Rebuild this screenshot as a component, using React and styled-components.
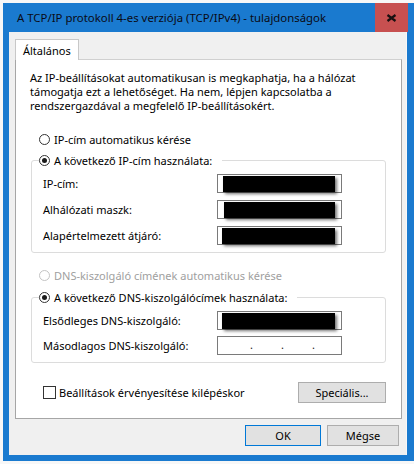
import React from 'react'
import styled, { createGlobalStyle } from 'styled-components'

const Global = createGlobalStyle`
  html, body {
    margin: 0;
    padding: 0;
    background: #f7f7f7;
  }
  body {
    font-family: "Noto Sans", "Open Sans", sans-serif;
    font-size: 11px;
    color: #000;
  }
`

const Window = styled.div`
  margin: 3px 0 0 3px;
  width: 411px;
  height: 458px;
  box-sizing: border-box;
  background: #1a7acf;
  padding: 0 7px 6px 6px;
  display: flex;
  flex-direction: column;
`

const TitleBar = styled.div`
  height: 29px;
  display: flex;
  align-items: center;
  flex-shrink: 0;
`

const Title = styled.div`
  flex: 1;
  padding-left: 8px;
  font-size: 11.4px;
  color: #0a0a14;
  white-space: nowrap;
`

const CloseButton = styled.div`
  width: 33px;
  height: 29px;
  margin-right: -1px;
  background: #c75050;
  display: flex;
  align-items: center;
  justify-content: center;
`

const Client = styled.div`
  flex: 1;
  background: #f0f0f0;
  border-right: 1px solid #f7f7f7;
  padding: 7px 4px 8px 6px;
  display: flex;
  flex-direction: column;
`

const Tabs = styled.div`
  display: flex;
`

const Tab = styled.div`
  height: 21px;
  box-sizing: border-box;
  padding: 3px 7px 0 7px;
  background: #fff;
  border: 1px solid #c8c8c8;
  border-bottom: none;
  margin-bottom: -1px;
  position: relative;
  z-index: 1;
  line-height: 15px;
`

const Panel = styled.div`
  height: 360px;
  box-sizing: border-box;
  background: #fff;
  border: 1px solid #a6a6a6;
  border-top-color: #d0d0d0;
  padding: 11px 15px 0 14px;
  display: flex;
  flex-direction: column;
`

const Intro = styled.p`
  margin: 0;
  line-height: 14px;
`

const Choice = styled.label`
  display: flex;
  align-items: center;
  gap: 4px;
  height: 13px;
  line-height: 13px;
  margin: ${p => p.$m || '0'};
  padding-left: ${p => p.$indent ?? 9}px;
  color: ${p => (p.$disabled ? '#a0a0a0' : '#000')};
`

const Radio = styled.span`
  width: 11px;
  height: 11px;
  box-sizing: border-box;
  border-radius: 50%;
  border: 1px solid ${p => (p.$disabled ? '#c4c4c4' : '#333')};
  background: #fff;
  display: flex;
  align-items: center;
  justify-content: center;
  flex-shrink: 0;

  &::after {
    content: '';
    display: ${p => (p.$on ? 'block' : 'none')};
    width: 5px;
    height: 5px;
    border-radius: 50%;
    background: #1a1a1a;
  }
`

const Group = styled.fieldset`
  margin: ${p => p.$m || '0'};
  padding: 7px 0 7px 11px;
  border: 1px solid #dcdcdc;
  border-radius: 3px;
  display: grid;
  grid-template-columns: 174px 125px;
  row-gap: ${p => p.$gap || 7}px;
  align-items: center;
`

const Legend = styled.legend`
  padding: 0 10px 0 0;
  margin-left: -4px;
  line-height: 13px;
`

const FieldLabel = styled.span`
  line-height: 13px;
`

const Field = styled.div`
  height: 19px;
  box-sizing: border-box;
  border: 1px solid #7a7a7a;
  background: #fff;
  display: flex;
  align-items: flex-start;
  gap: ${p => (p.$dots ? 28 : 0)}px;
  padding-left: ${p => (p.$dots ? 32 : 0)}px;
`

const Redacted = styled.div`
  height: 16px;
  margin: 1px 6px 0 ${p => p.$l || 5}px;
  flex: 1;
  background: #000;
  box-shadow: 2px 2px 3px rgba(0, 0, 0, 0.55);
`

const Dot = styled.span`
  line-height: 16px;
  width: 3px;
  color: #222;
`

const BottomRow = styled.div`
  display: flex;
  align-items: center;
  justify-content: space-between;
  margin: 19px 0 0 13px;
`

const CheckRow = styled.label`
  display: flex;
  align-items: center;
  gap: 3px;
`

const Checkbox = styled.span`
  width: 13px;
  height: 13px;
  box-sizing: border-box;
  border: 1px solid #333;
  background: #fff;
`

const Button = styled.div`
  width: ${p => p.$w || 76}px;
  height: 21px;
  box-sizing: border-box;
  background: #e1e1e1;
  border: 1px solid ${p => (p.$primary ? '#0078d7' : '#adadad')};
  display: flex;
  align-items: center;
  justify-content: center;
`

const Footer = styled.div`
  display: flex;
  justify-content: flex-end;
  gap: 6px;
  margin-top: 6px;
  padding-right: 3px;
`

const BlankField = () => (
  <Field $dots>
    <Dot>.</Dot>
    <Dot>.</Dot>
    <Dot>.</Dot>
  </Field>
)

const HiddenField = ({ l }) => (
  <Field>
    <Redacted $l={l} />
  </Field>
)

export default function App() {
  return (
    <>
      <Global />
      <Window>
        <TitleBar>
          <Title>A TCP/IP protokoll 4-es verziója (TCP/IPv4) - tulajdonságok</Title>
          <CloseButton>
            <svg width="11" height="8" viewBox="0 0 11 8">
              <path d="M1.5 1 L9.5 7 M9.5 1 L1.5 7" stroke="#1a1010" strokeWidth="2.2" />
            </svg>
          </CloseButton>
        </TitleBar>
        <Client>
          <Tabs>
            <Tab>Általános</Tab>
          </Tabs>
          <Panel>
            <Intro>
              Az IP-beállításokat automatikusan is megkaphatja, ha a hálózat
              <br />
              támogatja ezt a lehetőséget. Ha nem, lépjen kapcsolatba a
              <br />
              rendszergazdával a megfelelő IP-beállításokért.
            </Intro>

            <Choice $m="20px 0 0 0">
              <Radio />
              IP-cím automatikus kérése
            </Choice>

            <Group $m="8px 0 0 1px">
              <Legend>
                <Choice $indent={0}>
                  <Radio $on />
                  A következő IP-cím használata:
                </Choice>
              </Legend>
              <FieldLabel>IP-cím:</FieldLabel>
              <HiddenField l={5} />
              <FieldLabel>Alhálózati maszk:</FieldLabel>
              <HiddenField l={6} />
              <FieldLabel>Alapértelmezett átjáró:</FieldLabel>
              <HiddenField l={4} />
            </Group>

            <Choice $m="16px 0 0 0" $disabled>
              <Radio $disabled />
              DNS-kiszolgáló címének automatikus kérése
            </Choice>

            <Group $m="9px 0 0 1px" $gap={6}>
              <Legend>
                <Choice $indent={0}>
                  <Radio $on />
                  A következő DNS-kiszolgálócímek használata:
                </Choice>
              </Legend>
              <FieldLabel>Elsődleges DNS-kiszolgáló:</FieldLabel>
              <HiddenField l={4} />
              <FieldLabel>Másodlagos DNS-kiszolgáló:</FieldLabel>
              <BlankField />
            </Group>

            <BottomRow>
              <CheckRow>
                <Checkbox />
                Beállítások érvényesítése kilépéskor
              </CheckRow>
              <Button $w={88}>Speciális...</Button>
            </BottomRow>
          </Panel>
          <Footer>
            <Button $primary>OK</Button>
            <Button $w={72}>Mégse</Button>
          </Footer>
        </Client>
      </Window>
    </>
  )
}
